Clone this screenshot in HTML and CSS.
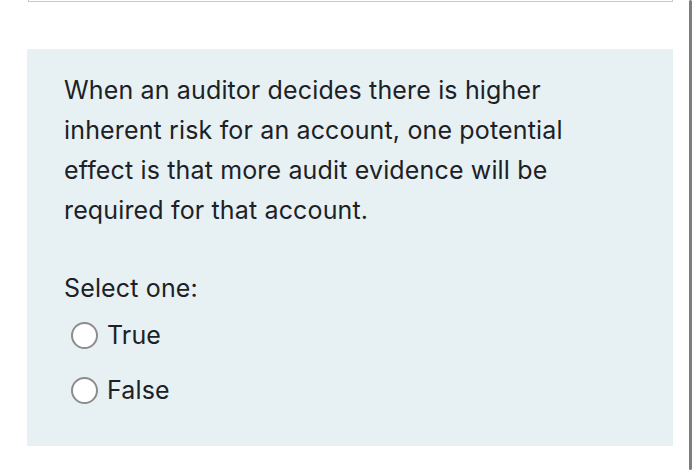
FILE: index.html
```html
<!DOCTYPE html>
<html>
<head>
<meta charset="utf-8">
<link rel="stylesheet" href="styles.css">
</head>
<body>
<div class="page">
  <div class="main">
    <div class="prev-box"></div>
    <div class="question">
      <p class="qtext">When an auditor decides there is higher inherent risk for an account, one potential effect is that more audit evidence will be required for that account.</p>
      <p class="prompt">Select one:</p>
      <div class="answers">
        <label class="option"><span class="radio"></span><span class="label">True</span></label>
        <label class="option"><span class="radio"></span><span class="label">False</span></label>
      </div>
    </div>
  </div>
  <div class="scrollbar"></div>
</div>
</body>
</html>
```
FILE: styles.css
```css
html, body {
  margin: 0;
  padding: 0;
  background: #ffffff;
}
body {
  font-family: Inter, "Liberation Sans", sans-serif;
  color: #1d2125;
  width: 700px;
  height: 473px;
  overflow: hidden;
}
.page {
  display: flex;
  height: 473px;
}
.main {
  width: 646px;
  margin-left: 27px;
  display: flex;
  flex-direction: column;
}
.prev-box {
  height: 1px;
  margin: 0 0 0 1px;
  width: 643px;
  border: 1px solid #c9c9cc;
  border-top: none;
  background: #fff;
}
.question {
  margin-top: 47px;
  height: 397px;
  background: #e7f1f4;
  padding: 21px 0 0 37px;
  box-sizing: border-box;
}
.qtext {
  margin: 0;
  width: 520px;
  font-size: 25px;
  line-height: 40px;
  letter-spacing: 0.15px;
}
.prompt {
  margin: 43px 0 0 0;
  font-size: 25px;
  line-height: 30px;
  letter-spacing: 0.15px;
}
.answers {
  display: flex;
  flex-direction: column;
  gap: 25px;
  margin-top: 17px;
  padding-left: 7px;
}
.option {
  display: flex;
  align-items: center;
  gap: 9px;
  height: 30px;
  font-size: 25px;
  letter-spacing: 0.15px;
}
.radio {
  width: 23px;
  height: 23px;
  border: 2px solid #8c8c8c;
  border-radius: 50%;
  background: #fff;
  flex: none;
}
.scrollbar {
  margin-left: 16px;
  width: 3px;
  height: 470px;
  background: #7d7d7d;
  border-radius: 2px;
}
```
